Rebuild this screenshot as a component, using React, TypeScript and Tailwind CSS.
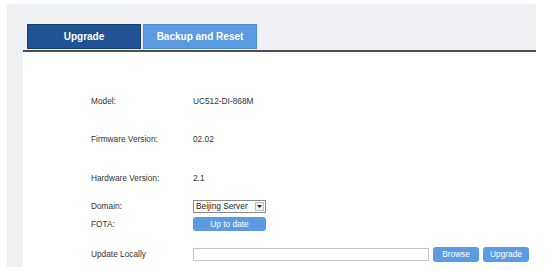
import React from "react";

const rows = [
  { label: "Model:", value: "UC512-DI-868M", mt: "mt-[42px]" },
  { label: "Firmware Version:", value: "02.02", mt: "mt-[24px]" },
  { label: "Hardware Version:", value: "2.1", mt: "mt-[25px]" },
];

export default function App() {
  return (
    <div
      className="w-[550px] h-[271px] bg-white pt-[4px] pl-[7px] text-[#333]"
      style={{ fontFamily: '"Liberation Sans", Arial, sans-serif' }}
    >
      <div className="w-[529px] h-[263px] bg-[#eef0f3] flex flex-col">
        {/* tabs */}
        <div className="h-[46px] pl-[20px] pb-[1px] flex items-end gap-[2px]">
          <div className="w-[114px] h-[25px] bg-[#1f5394] border border-[#173f72] flex items-center justify-center text-white text-[10px] font-bold">
            Upgrade
          </div>
          <div className="w-[114px] h-[25px] bg-[#5b9be2] border border-[#4f8bd0] flex items-center justify-center text-white text-[10px] font-bold">
            Backup and Reset
          </div>
        </div>

        {/* content */}
        <div className="ml-[16px] flex-1 bg-white border-t-2 border-[#4f4f4f] pl-[68px] text-[8.3px]">
          {rows.map((r) => (
            <div key={r.label} className={`${r.mt} h-[14px] flex items-center`}>
              <div className="w-[102px]">{r.label}</div>
              <div>{r.value}</div>
            </div>
          ))}

          <div className="mt-[14px] h-[14px] flex items-center">
            <div className="w-[102px]">Domain:</div>
            <div className="w-[73px] h-[13px] border border-[#8a8a8a] flex items-center justify-between pl-[2px] pr-[1px] text-[#222]">
              <span>Beijing Server</span>
              <span className="w-[9px] h-[9px] border border-[#bbb] bg-[#f0f0f0] flex items-center justify-center">
                <svg width="5" height="3" viewBox="0 0 5 3">
                  <path d="M0 0h5L2.5 3z" fill="#222" />
                </svg>
              </span>
            </div>
          </div>

          <div className="mt-[4px] h-[14px] flex items-center">
            <div className="w-[102px]">FOTA:</div>
            <div className="w-[73px] h-[14px] rounded-[3px] bg-[#5b9be2] text-white flex items-center justify-center">
              Up to date
            </div>
          </div>

          <div className="mt-[16px] h-[15px] flex items-center">
            <div className="w-[102px]">Update Locally</div>
            <div className="w-[236px] h-[13px] border border-[#c4c4c4]" />
            <div className="ml-[4px] w-[46px] h-[15px] rounded-[3px] bg-[#5b9be2] text-white flex items-center justify-center">
              Browse
            </div>
            <div className="ml-[4px] w-[46px] h-[15px] rounded-[3px] bg-[#5b9be2] text-white flex items-center justify-center">
              Upgrade
            </div>
          </div>
        </div>
      </div>
    </div>
  );
}
